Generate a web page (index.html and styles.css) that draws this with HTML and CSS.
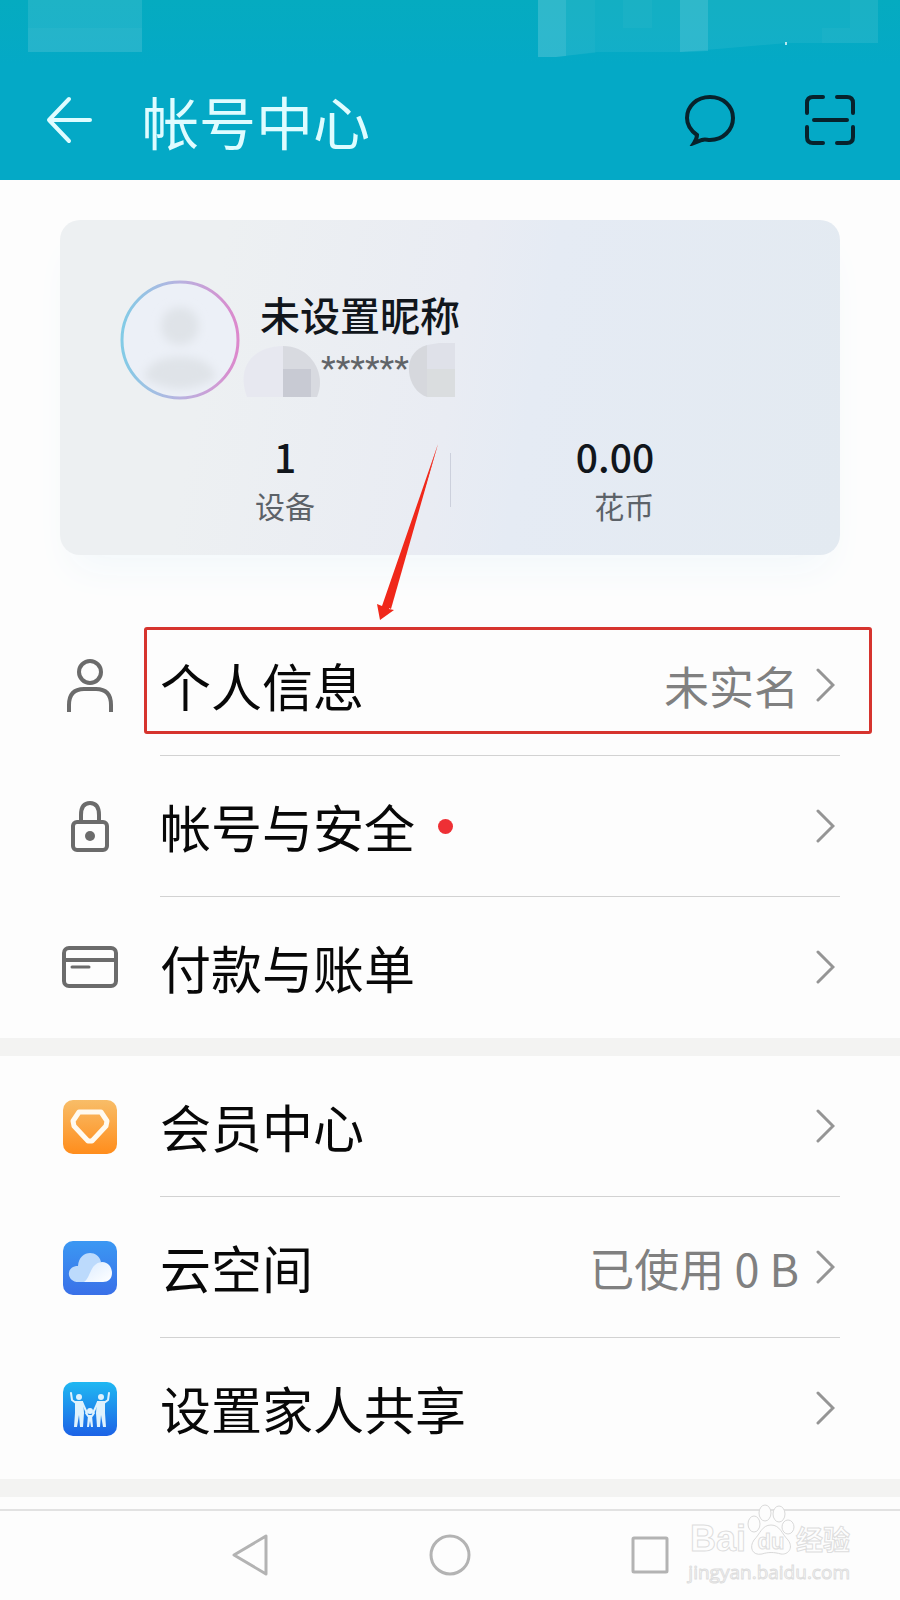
FILE: index.html
```html
<!DOCTYPE html>
<html lang="zh-CN">
<head>
<meta charset="utf-8">
<meta name="viewport" content="width=device-width, initial-scale=1">
<title>帐号中心</title>
<link rel="stylesheet" href="styles.css">
</head>
<body>
<header class="top">
  <div class="status" aria-hidden="true">
    <svg class="status-left" width="114" height="52" viewBox="0 0 114 52">
      <path fill="#fff" fill-opacity=".1" d="M0 0h114v52H0z"/>
      <path fill="#fff" fill-opacity=".03" d="M0 28h114v24H0z"/>
    </svg>
    <svg class="status-right" width="340" height="57" viewBox="0 0 340 57">
      <g fill="#fff">
        <path fill-opacity=".06" d="M0 0h340v43h-90l-70 6-38 3H60L18 57H0z"/>
        <path fill-opacity=".12" d="M0 0h28v56l-10 1H0zM142 0h28v51l-28 1z"/>
        <path fill-opacity=".03" d="M28 0h29v53l-29 3zM85 0h29v28H85zM284 28h56v15h-56zM312 0h28v28h-28z"/>
        <path fill-opacity=".7" d="M247 42h2v3h-2z"/>
      </g>
    </svg>
  </div>
  <div class="appbar">
    <button class="icon-btn" aria-label="返回">
      <svg width="46" height="48" viewBox="0 0 46 48" fill="none" stroke="#dffcff" stroke-width="4" stroke-linecap="round" stroke-linejoin="round"><path d="M23 3 3 24l20 21M3 24h41"/></svg>
    </button>
    <h1 class="title">帐号中心</h1>
    <div class="actions">
      <button class="icon-btn" aria-label="消息">
        <svg width="52" height="52" viewBox="0 0 52 52" fill="none" stroke="#07222c" stroke-width="4"><path d="M13 41C6 36 3 31 3 24 3 12 13 3 26 3s23 9 23 21-10 22-23 22c-3 0-5-1-8 0l-8 3c2-3 3-5 3-8z"/></svg>
      </button>
      <button class="icon-btn" aria-label="扫一扫">
        <svg width="52" height="52" viewBox="0 0 52 52" fill="none" stroke="#07222c" stroke-width="4" stroke-linecap="round"><path d="M3 19V9q0-6 6-6h10M33 3h10q6 0 6 6v10M49 33v10q0 6-6 6H33M19 49H9q-6 0-6-6V33M10 26h33"/></svg>
      </button>
    </div>
  </div>
</header>

<main class="content">
  <section class="card">
    <div class="profile">
      <svg class="avatar" width="120" height="120" viewBox="0 0 120 120" role="img" aria-label="头像">
        <defs>
          <linearGradient id="ring"><stop offset="0" stop-color="#82cbe6"/><stop offset=".5" stop-color="#b8b2e0"/><stop offset="1" stop-color="#dc88cc"/></linearGradient>
          <filter id="soft"><feGaussianBlur stdDeviation="5"/></filter>
        </defs>
        <circle cx="60" cy="60" r="58" fill="#ecf0f7" stroke="url(#ring)" stroke-width="3"/>
        <g fill="#dfe3e8" filter="url(#soft)"><circle cx="60" cy="46" r="19"/><path d="M24 98q4-21 36-21t36 21q-36 22-72 0z"/></g>
      </svg>
      <div class="who">
        <p class="nickname">未设置昵称</p>
        <p class="phone">
          <svg width="80" height="54" viewBox="0 0 80 54" aria-hidden="true"><path fill="#e7e8f0" d="M6 54C-6 22 15 3 42 3v51z"/><path fill="#d8dae0" d="M42 3c28 0 44 28 34 51H42z"/><path fill="#c8cad3" d="M42 26h28v28H42z"/></svg>
          <span class="mask">******</span>
          <svg width="46" height="54" viewBox="0 0 46 54" aria-hidden="true"><path fill="#d6d8dd" d="M18 54C-2 48-10 10 18 2z"/><path fill="#dfe1e9" d="M18 2 30 0h16v26H18z"/><path fill="#dadddf" d="M18 26h28v28H18z"/></svg>
        </p>
      </div>
    </div>
    <div class="stats">
      <a class="stat" href="#devices"><strong>1</strong><span>设备</span></a>
      <a class="stat" href="#coins"><span class="stat-end"><strong>0.00</strong><span>花币</span></span></a>
    </div>
  </section>

  <nav class="list" aria-label="帐号">
    <a class="row" href="#profile">
      <svg class="row-icon" width="56" height="56" viewBox="0 0 56 56" fill="none" stroke="#6b6b6b" stroke-width="4"><circle cx="28" cy="14" r="11"/><path d="M7 54V47Q7 31 22 31h12q15 0 15 16v7"/></svg>
      <span class="row-body"><span class="label">个人信息</span><span class="value">未实名</span>
      <svg class="chevron" width="20" height="36" viewBox="0 0 20 36"><path d="m3 3 15 15L3 33"/></svg></span>
    </a>
    <a class="row" href="#security">
      <svg class="row-icon" width="56" height="56" viewBox="0 0 56 56" fill="none" stroke="#6b6b6b" stroke-width="4"><rect x="11" y="23" width="34" height="28" rx="4"/><path d="M19 23v-7q0-12 9-12t9 12v7"/><circle cx="28" cy="37" r="5" fill="#6b6b6b" stroke="none"/></svg>
      <span class="row-body"><span class="label">帐号与安全<i class="dot"></i></span>
      <svg class="chevron" width="20" height="36" viewBox="0 0 20 36"><path d="m3 3 15 15L3 33"/></svg></span>
    </a>
    <a class="row" href="#billing">
      <svg class="row-icon" width="56" height="56" viewBox="0 0 56 56" fill="none" stroke="#6b6b6b" stroke-width="4"><rect x="2" y="8" width="52" height="38" rx="5"/><path d="M3 20h50"/><path d="M10 27h17" stroke-linecap="round" stroke-width="3"/></svg>
      <span class="row-body"><span class="label">付款与账单</span>
      <svg class="chevron" width="20" height="36" viewBox="0 0 20 36"><path d="m3 3 15 15L3 33"/></svg></span>
    </a>
    <div class="highlight" aria-hidden="true">
      <svg width="62" height="178" viewBox="0 0 62 178"><path fill="#f0281a" d="M62 0 11 163 15 165z"/><path fill="#f0281a" d="M62 0 13 165l5 1L4 176 1 160l5 2z"/></svg>
    </div>
  </nav>

  <nav class="list" aria-label="服务">
    <a class="row" href="#member">
      <svg class="row-icon" width="56" height="56" viewBox="0 0 56 56"><defs><linearGradient id="or" x2="0" y2="1"><stop offset="0" stop-color="#f8bd68"/><stop offset="1" stop-color="#ff8d1c"/></linearGradient></defs><rect x="1" y="1" width="54" height="54" rx="10" fill="url(#or)"/><path d="M17 13h22l6 9-1 5-14 15h-4L12 27l-1-5z" fill="none" stroke="#fffaf0" stroke-width="5" stroke-linejoin="round"/></svg>
      <span class="row-body"><span class="label">会员中心</span>
      <svg class="chevron" width="20" height="36" viewBox="0 0 20 36"><path d="m3 3 15 15L3 33"/></svg></span>
    </a>
    <a class="row" href="#cloud">
      <svg class="row-icon" width="56" height="56" viewBox="0 0 56 56"><defs><linearGradient id="bl" x2="0" y2="1"><stop offset="0" stop-color="#3b98f3"/><stop offset="1" stop-color="#3a70e8"/></linearGradient><linearGradient id="cl" x2="1" y2="1"><stop offset="0" stop-color="#dcecff"/><stop offset="1" stop-color="#fff"/></linearGradient></defs><rect x="1" y="1" width="54" height="54" rx="10" fill="url(#bl)"/><path fill="#bcdafc" d="M18 42C4 43 3 26 16 26 17 10 36 9 39 22L27 42z"/><path fill="url(#cl)" d="M22 42c7-5 6-19 18-20 7 0 10 6 10 11 0 6-4 9-9 9z"/></svg>
      <span class="row-body"><span class="label">云空间</span><span class="value">已使用 0 B</span>
      <svg class="chevron" width="20" height="36" viewBox="0 0 20 36"><path d="m3 3 15 15L3 33"/></svg></span>
    </a>
    <a class="row" href="#family">
      <svg class="row-icon" width="56" height="56" viewBox="0 0 56 56"><defs><linearGradient id="fa" x2="0" y2="1"><stop offset="0" stop-color="#20b8f2"/><stop offset="1" stop-color="#1c62e6"/></linearGradient></defs><rect x="1" y="1" width="54" height="54" rx="10" fill="url(#fa)"/><g fill="#dff2fd"><circle cx="17" cy="16" r="3"/><circle cx="39" cy="16" r="3"/><circle cx="28" cy="30" r="3"/><path d="M13 20h8l1 12-1 14h-3l-1-12-2 12h-3l1-14zM43 20h-8l-1 12 1 14h3l1-12 2 12h3l-1-14zM26 34h4l1 12h-2l-1-6-1 6h-2z"/></g><g fill="none" stroke="#dff2fd" stroke-width="2" stroke-linecap="round" stroke-linejoin="round"><path d="M9 12l1 7 4 3M20 21l5 11M47 12l-1 7-4 3M36 21l-5 11M24 32l2 3M32 32l-2 3"/></g></svg>
      <span class="row-body"><span class="label">设置家人共享</span>
      <svg class="chevron" width="20" height="36" viewBox="0 0 20 36"><path d="m3 3 15 15L3 33"/></svg></span>
    </a>
  </nav>
</main>

<footer class="navbar">
  <button class="icon-btn" aria-label="返回键"><svg width="40" height="44" viewBox="0 0 40 44"><path d="M36 3v38L4 22z"/></svg></button>
  <button class="icon-btn" aria-label="主屏幕"><svg width="44" height="44" viewBox="0 0 44 44"><circle cx="22" cy="22" r="19"/></svg></button>
  <button class="icon-btn" aria-label="最近任务"><svg width="40" height="40" viewBox="0 0 40 40"><rect x="3" y="3" width="34" height="34" rx="1"/></svg></button>
  <div class="watermark">
    <div class="brand">
      <span class="bai">Bai</span>
      <span class="paw">
        <svg width="50" height="54" viewBox="0 0 50 54" aria-hidden="true"><ellipse cx="8" cy="21" rx="6" ry="8"/><ellipse cx="19" cy="10" rx="6" ry="8"/><ellipse cx="33" cy="11" rx="6" ry="8"/><ellipse cx="42" cy="24" rx="6" ry="7"/><path d="M25 22c9 0 11 9 17 15 6 8 0 15-7 14-7-2-13-2-19 0C6 53 3 44 8 37c6-6 8-15 17-15z"/></svg>
        <span class="du">du</span>
      </span>
      <span class="jy">经验</span>
    </div>
    <div class="site">jingyan.baidu.com</div>
  </div>
</footer>
</body>
</html>
```

FILE: styles.css
```css
* { box-sizing: border-box; }

body {
  margin: 0;
  background: #fdfdfd;
  color: #080808;
  font-family: "Noto Sans CJK SC", "Noto Sans", sans-serif;
}

a { color: inherit; text-decoration: none; }
h1, p { margin: 0; font-weight: 400; }
svg { display: block; flex: none; }

.icon-btn {
  display: flex;
  padding: 0;
  border: 0;
  background: none;
}

/* Header */
.top { background: linear-gradient(#05abc0, #04a9c6 36%); }

.status {
  display: flex;
  justify-content: space-between;
  height: 60px;
  padding: 0 22px 0 28px;
}

.appbar {
  display: flex;
  align-items: center;
  height: 120px;
  padding: 0 44px 0 46px;
}

.title {
  margin-left: 50px;
  color: #dffcff;
  font-size: 57px;
  font-weight: 400;
  line-height: 64px;
}

.actions {
  display: flex;
  gap: 68px;
  margin-left: auto;
}

/* Profile card */
.card {
  height: 335px;
  margin: 40px 60px 60px;
  padding: 60px;
  border-radius: 20px;
  background: linear-gradient(100deg, #edf0f2 20%, #e9ecf3 50%, #e5ebf4 60%, #e3eaf1);
  box-shadow: 0 24px 40px -12px #f2f8fb;
}

.profile { display: flex; height: 120px; }
.who { padding-top: 10px; }

.nickname {
  padding-left: 20px;
  color: #11161c;
  font-size: 40px;
  font-weight: 500;
  line-height: 48px;
}

.phone {
  display: flex;
  height: 60px;
  padding: 5px 0 0 1px;
}

.mask {
  color: #606468;
  font-family: Roboto, sans-serif;
  font-size: 34px;
  line-height: 50px;
}

.stats {
  display: flex;
  margin-top: 31px;
}

.stat {
  display: flex;
  flex: 1;
  flex-direction: column;
  align-items: center;
  color: #5c6268;
  font-size: 30px;
  line-height: 48px;
}

.stat + .stat { position: relative; }
.stat + .stat::before {
  content: "";
  position: absolute;
  top: 22px;
  left: 0;
  width: 1px;
  height: 54px;
  background: #ccd0dc;
}

.stat strong {
  color: #11161c;
  font-size: 39px;
  font-weight: 500;
  line-height: 50px;
}

.stat-end {
  display: flex;
  flex-direction: column;
  align-items: flex-end;
}

/* Settings rows */
.list {
  position: relative;
  border-bottom: 18px solid #f3f3f2;
}

.row {
  display: flex;
  align-items: center;
  height: 141px;
  padding: 0 60px 0 62px;
}

.row-body {
  display: flex;
  flex: 1;
  align-items: center;
  height: 100%;
  margin-left: 42px;
  padding-right: 5px;
  border-bottom: 1px solid #d2d2d2;
}

.row:nth-of-type(3) .row-body { border-bottom-color: transparent; }

.label {
  display: flex;
  align-items: center;
  font-size: 51px;
  font-weight: 400;
  line-height: 60px;
}

.dot {
  width: 15px;
  height: 15px;
  margin-left: 23px;
  border-radius: 50%;
  background: #ee3035;
}

.value {
  margin-left: auto;
  color: #808080;
  font-size: 45px;
  font-weight: 400;
}

.chevron {
  margin-left: auto;
  fill: none;
  stroke: #959595;
  stroke-width: 3;
  stroke-linecap: round;
}

.value + .chevron { margin-left: 16px; }

.highlight {
  position: absolute;
  top: 12px;
  right: 28px;
  left: 144px;
  height: 107px;
  border: 3px solid #d6342e;
  border-radius: 3px;
  pointer-events: none;
}

.highlight svg {
  position: absolute;
  bottom: 109px;
  left: 229px;
}

/* System navigation */
.navbar {
  position: relative;
  display: flex;
  align-items: center;
  justify-content: space-between;
  height: 90px;
  margin-top: 12px;
  padding: 0 230px;
  border-top: 2px solid #e2e2e2;
}

.navbar > .icon-btn svg {
  fill: none;
  stroke: #b3b3b3;
  stroke-width: 3;
  stroke-linejoin: round;
}

/* Site mark */
.watermark {
  position: absolute;
  top: -8px;
  right: 50px;
  color: #fdfdfd;
  -webkit-text-stroke: 1px #dedede;
}

.brand {
  display: flex;
  align-items: flex-end;
  justify-content: flex-end;
  height: 54px;
}

.bai { font: 700 36px/36px "Liberation Sans", sans-serif; }
.paw svg { fill: #fdfdfd; stroke: #d9d9d9; }

.paw {
  display: grid;
  align-items: end;
  justify-items: center;
}

.paw > * { grid-area: 1 / 1; }

.du {
  padding-bottom: 3px;
  font: 700 22px/24px "Liberation Sans", sans-serif;
}

.jy {
  font-size: 27px;
  font-weight: 700;
  line-height: 36px;
}

.site { font: 400 19px/30px "Open Sans", sans-serif; }
```
